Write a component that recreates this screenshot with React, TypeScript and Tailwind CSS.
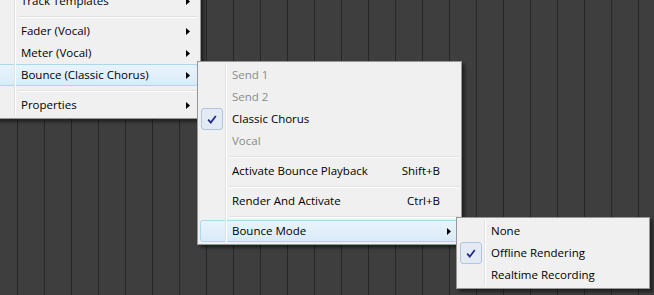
import React from "react";

type Entry =
  | {
      kind: "item";
      label: string;
      disabled?: boolean;
      checked?: boolean;
      shortcut?: string;
      submenu?: boolean;
      active?: boolean;
    }
  | { kind: "sep" };

const mainMenu: Entry[] = [
  { kind: "item", label: "Track Templates", submenu: true },
  { kind: "sep" },
  { kind: "item", label: "Fader (Vocal)", submenu: true },
  { kind: "item", label: "Meter (Vocal)", submenu: true },
  { kind: "item", label: "Bounce (Classic Chorus)", submenu: true, active: true },
  { kind: "sep" },
  { kind: "item", label: "Properties", submenu: true },
];

const bounceMenu: Entry[] = [
  { kind: "item", label: "Send 1", disabled: true },
  { kind: "item", label: "Send 2", disabled: true },
  { kind: "item", label: "Classic Chorus", checked: true },
  { kind: "item", label: "Vocal", disabled: true },
  { kind: "sep" },
  { kind: "item", label: "Activate Bounce Playback", shortcut: "Shift+B" },
  { kind: "sep" },
  { kind: "item", label: "Render And Activate", shortcut: "Ctrl+B" },
  { kind: "sep" },
  { kind: "item", label: "Bounce Mode", submenu: true, active: true },
];

const modeMenu: Entry[] = [
  { kind: "item", label: "None" },
  { kind: "item", label: "Offline Rendering", checked: true },
  { kind: "item", label: "Realtime Recording" },
];

function CheckBox() {
  return (
    <div className="absolute left-0 top-[-1px] w-[22px] h-[22px] rounded-[3px] border border-[#b2c5de] bg-[#e3eaf4] flex items-center justify-center">
      <svg width="10" height="9" viewBox="0 0 10 9">
        <path d="M1.2 4.6 L3.8 7.6 L8.8 1" fill="none" stroke="#1a2a86" strokeWidth="1.7" />
      </svg>
    </div>
  );
}

function Arrow() {
  return (
    <svg className="absolute right-[7px] top-[6.5px]" width="4" height="7" viewBox="0 0 4 7">
      <path d="M0 0 L4 3.5 L0 7 Z" fill="#000" />
    </svg>
  );
}

function Menu({ items, className }: { items: Entry[]; className: string }) {
  return (
    <div
      className={`absolute border border-[#979797] bg-[#f0f0f0] p-[2px] shadow-[3px_3px_3px_rgba(0,0,0,0.45)] font-['Open_Sans',sans-serif] text-[11.5px] ${className}`}
    >
      {/* gutter line */}
      <div className="absolute top-[2px] bottom-[2px] left-[27px] w-[2px] border-l border-[#e0e1e1] border-r border-r-white z-10 pointer-events-none" />
      {items.map((it, i) =>
        it.kind === "sep" ? (
          <div key={i} className="h-[8px] pt-[4px] pl-[29px]">
            <div className="h-[2px] border-t border-[#e0e0e0] border-b border-b-white" />
          </div>
        ) : (
          <div
            key={i}
            className={`relative h-[22px] flex items-center border rounded-[3px] pl-[31px] pr-[18px] pb-[1px] ${
              it.active
                ? "border-[#a8d8ec] bg-gradient-to-b from-[#e9f4fc] to-[#d9ebf8]"
                : "border-transparent"
            } ${it.disabled ? "text-[#8b8b8b]" : "text-black"}`}
          >
            {it.checked && <CheckBox />}
            <span className="whitespace-nowrap leading-none">{it.label}</span>
            {it.shortcut && <span className="ml-auto whitespace-nowrap leading-none">{it.shortcut}</span>}
            {it.submenu && <Arrow />}
          </div>
        )
      )}
    </div>
  );
}

export default function App() {
  const cols = Array.from({ length: 24 });
  return (
    <div className="relative w-[654px] h-[295px] overflow-hidden bg-[#3e3e3e]">
      <div className="flex h-full pl-[17px]">
        {cols.map((_, i) => (
          <div key={i} className="w-[27px] h-full shrink-0 border-l border-[#262626]" />
        ))}
      </div>

      <Menu items={mainMenu} className="left-[-14px] top-[-13px] w-[215px]" />
      <Menu items={bounceMenu} className="left-[197px] top-[61px] w-[265px]" />
      <Menu items={modeMenu} className="left-[456px] top-[217px] w-[194px]" />
    </div>
  );
}
